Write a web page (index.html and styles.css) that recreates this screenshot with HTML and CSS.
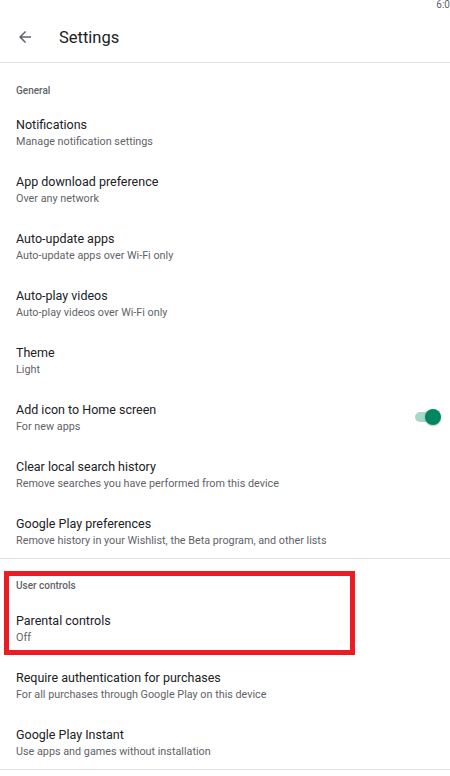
FILE: index.html
```html
<!DOCTYPE html>
<html lang="en">
<head>
  <meta charset="UTF-8">
  <title>Settings</title>
  <meta name="viewport" content="width=device-width, initial-scale=1.0">
  <link rel="stylesheet" href="styles.css">
</head>
<body>
  <div class="status-bar">6:0</div>

  <header class="toolbar">
    <svg class="back-icon" viewBox="0 0 24 24" width="18" height="18">
      <path d="M20 11H7.83l5.59-5.59L12 4l-8 8 8 8 1.41-1.41L7.83 13H20v-2z" fill="#5f6368"/>
    </svg>
    <h1>Settings</h1>
  </header>

  <section class="group">
    <div class="group-title">General</div>

    <div class="item">
      <div class="item-title">Notifications</div>
      <div class="item-sub">Manage notification settings</div>
    </div>
    <div class="item">
      <div class="item-title">App download preference</div>
      <div class="item-sub">Over any network</div>
    </div>
    <div class="item">
      <div class="item-title">Auto-update apps</div>
      <div class="item-sub">Auto-update apps over Wi-Fi only</div>
    </div>
    <div class="item">
      <div class="item-title">Auto-play videos</div>
      <div class="item-sub">Auto-play videos over Wi-Fi only</div>
    </div>
    <div class="item">
      <div class="item-title">Theme</div>
      <div class="item-sub">Light</div>
    </div>
    <div class="item item-switch">
      <div>
        <div class="item-title">Add icon to Home screen</div>
        <div class="item-sub">For new apps</div>
      </div>
      <div class="switch"><span class="switch-thumb"></span></div>
    </div>
    <div class="item">
      <div class="item-title">Clear local search history</div>
      <div class="item-sub">Remove searches you have performed from this device</div>
    </div>
    <div class="item">
      <div class="item-title">Google Play preferences</div>
      <div class="item-sub">Remove history in your Wishlist, the Beta program, and other lists</div>
    </div>
  </section>

  <section class="group group-user">
    <div class="highlight">
      <div class="group-title">User controls</div>
      <div class="item">
        <div class="item-title">Parental controls</div>
        <div class="item-sub">Off</div>
      </div>
    </div>
    <div class="item">
      <div class="item-title">Require authentication for purchases</div>
      <div class="item-sub">For all purchases through Google Play on this device</div>
    </div>
    <div class="item">
      <div class="item-title">Google Play Instant</div>
      <div class="item-sub">Use apps and games without installation</div>
    </div>
  </section>
</body>
</html>
```

FILE: styles.css
```css
* {
  margin: 0px;
  padding: 0px;
  box-sizing: border-box;
}

body {
  font-family: 'Roboto', 'Noto Sans', sans-serif;
  color: #202124;
  background: #fff;
  width: 450px;
  overflow: hidden;
}

.status-bar {
  height: 12px;
  font-size: 10px;
  line-height: 9px;
  color: #5f6368;
  text-align: right;
}

.toolbar {
  height: 51px;
  display: flex;
  align-items: center;
  border-bottom: 1px solid #e0e0e0;
  padding-left: 16px;
}

.back-icon {
  display: block;
}

.toolbar h1 {
  font-size: 16.5px;
  font-weight: 400;
  margin-left: 25px;
  color: #202124;
}

.group {
  border-bottom: 1px solid #e0e0e0;
}

.group-title {
  font-size: 10px;
  line-height: 14px;
  font-weight: 500;
  color: #5f6368;
  padding: 21px 16px 4px;
}

.item {
  height: 57px;
  padding: 14px 16px 0;
}

.item-title {
  font-size: 12.5px;
  line-height: 18px;
}

.item-sub {
  font-size: 10.8px;
  line-height: 16px;
  color: #5f6368;
}

.item-switch {
  display: flex;
  justify-content: space-between;
  align-items: flex-start;
  padding-right: 9px;
}

.switch {
  position: relative;
  width: 26px;
  height: 16px;
  margin-top: 8px;
}

.switch::before {
  content: '';
  position: absolute;
  left: 0;
  top: 3px;
  width: 24px;
  height: 10px;
  border-radius: 5px;
  background: #a8d8c8;
}

.switch-thumb {
  position: absolute;
  right: 0;
  top: 0;
  width: 16px;
  height: 16px;
  border-radius: 50%;
  background: #01875f;
  box-shadow: 0 1px 2px rgba(0,0,0,0.25);
}

.group-user .highlight {
  margin: 12px 0 0 4px;
  width: 351px;
  border: 5px solid #ed1c24;
}

.highlight .group-title {
  padding: 3px 7px 5px;
}

.highlight .item {
  height: 52px;
  padding-left: 7px;
}
```
